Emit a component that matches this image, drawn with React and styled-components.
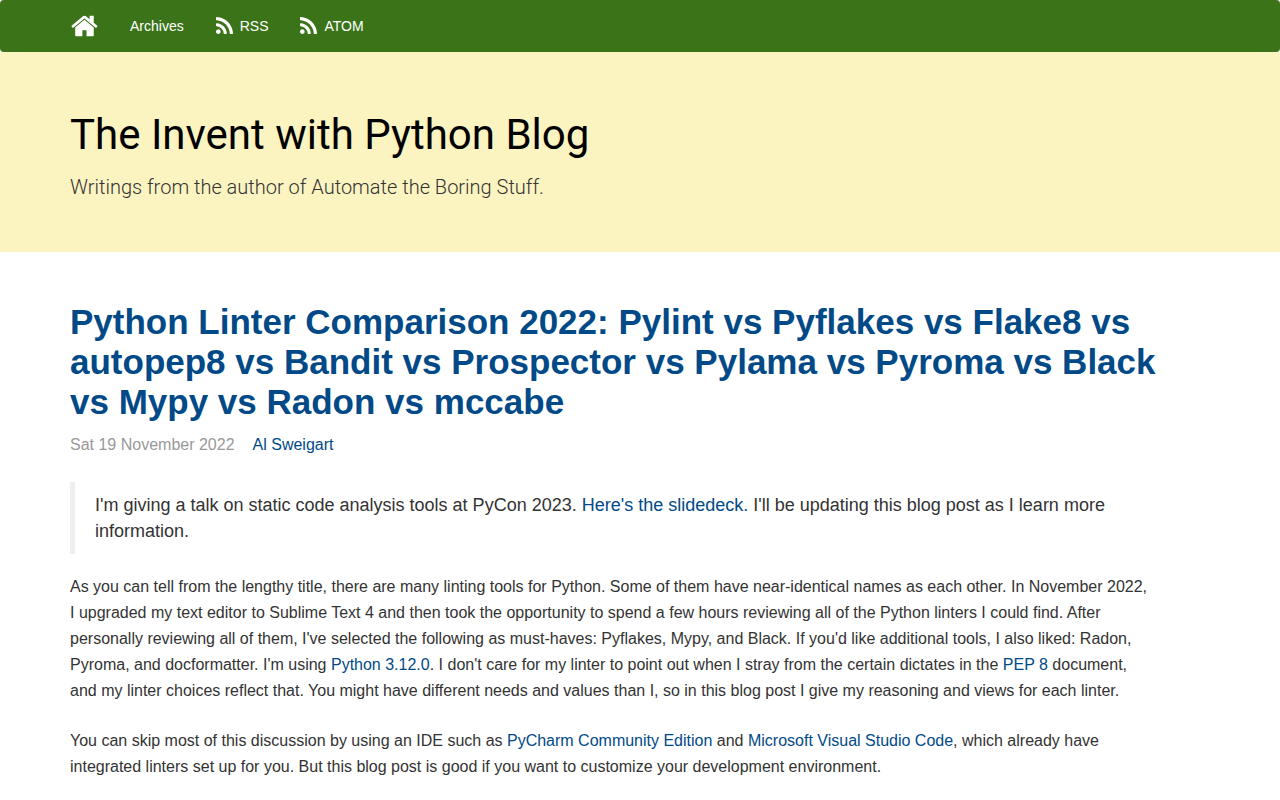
import React from "react";
import styled, { createGlobalStyle } from "styled-components";

const GlobalStyle = createGlobalStyle`
  * { box-sizing: border-box; }
  body {
    margin: 0;
    background: #fff;
    color: #333;
    font: 16px/26px "Liberation Sans", Arial, sans-serif;
  }
`;

const Container = styled.div`
  max-width: 1140px;
  margin: 0 auto;
`;

const NavBar = styled.nav`
  padding: 0 70px;
  background: #3b7319;
  border-radius: 4px;
`;

const NavList = styled(Container)`
  display: flex;
  align-items: center;
  gap: 32px;
  min-height: 52px;
`;

const NavLink = styled.a`
  display: flex;
  align-items: center;
  gap: 7px;
  color: #fff;
  font-size: 14px;
  line-height: 20px;
  text-decoration: none;
`;

const Icon = styled.svg`
  display: block;
  width: ${(p) => p.$width}px;
  height: ${(p) => p.$height}px;
  fill: currentColor;
`;

const Masthead = styled.header`
  padding: 60px 70px 51px;
  background: #fbf4c1;
`;

const SiteTitle = styled.h1`
  margin: 0 0 15px;
  color: #000;
  font-family: Roboto, sans-serif;
  font-size: 42px;
  line-height: 46px;
  font-weight: 400;
`;

const Tagline = styled.p`
  margin: 0;
  font-family: Roboto, sans-serif;
  font-size: 20px;
  line-height: 28px;
  font-weight: 300;
`;

const Main = styled.main`
  padding: 50px 70px 0;
`;

const Link = styled.a`
  color: #024a87;
  text-decoration: none;
`;

const PostTitle = styled.h2`
  max-width: 1100px;
  margin: 0 0 10px;
  font-size: 35px;
  line-height: 40px;
  font-weight: 700;
`;

const PostBody = styled.div`
  max-width: 1084px;
`;

const Byline = styled.div`
  display: flex;
  gap: 18px;
  margin-bottom: 24px;
`;

const PostDate = styled.time`
  color: #999;
`;

const Note = styled.blockquote`
  margin: 0 0 20px;
  padding: 10px 20px;
  border-left: 5px solid #eee;
  font-size: 18px;
`;

const Paragraph = styled.p`
  margin: 0 0 24px;
`;

const HomeIcon = () => (
  <Icon $width={28} $height={22} viewBox="0 253 1736 1283" aria-hidden="true">
    <path d="M1472 992v480q0 26-19 45t-45 19h-384v-384h-256v384h-384q-26 0-45-19t-19-45v-480q0-1 .5-3t.5-3l575-474 575 474q1 2 1 6zm223-69l-62 74q-8 9-21 11h-3q-13 0-21-7l-692-577-692 577q-12 8-24 7-13-2-21-11l-62-74q-8-10-7-23.500t11-21.500l719-599q32-26 76-26t76 26l244 204v-195q0-14 9-23t23-9h192q14 0 23 9t9 23v408l219 182q10 8 11 21.500t-7 23.500z" />
  </Icon>
);

const FeedIcon = () => (
  <Icon $width={17} $height={18} viewBox="192 128 1408 1492" aria-hidden="true">
    <path d="M576 1344q0 80-56 136t-136 56-136-56-56-136 56-136 136-56 136 56 56 136zm512 123q2 28-17 48-18 21-47 21h-135q-25 0-43-16.500t-20-41.500q-22-229-184.500-391.500t-391.500-184.500q-25-2-41.500-20t-16.500-43v-135q0-29 21-47 17-17 43-17h5q160 13 306 80.500t259 181.500q114 113 181.500 259t80.500 306zm512 2q2 27-18 47-18 20-46 20h-143q-26 0-44.500-17.500t-19.500-42.500q-12-215-101-408.500t-231.500-336-336-231.500-408.500-102q-25-1-42.500-19.500t-17.500-43.500v-143q0-28 20-46 18-18 44-18h3q262 13 501.500 120t425.500 294q187 186 294 425.500t120 501.500z" />
  </Icon>
);

export default function App() {
  return (
    <>
      <GlobalStyle />
      <NavBar>
        <NavList>
          <NavLink href="#home" aria-label="Home"><HomeIcon /></NavLink>
          <NavLink href="#archives">Archives</NavLink>
          <NavLink href="#rss"><FeedIcon />RSS</NavLink>
          <NavLink href="#atom"><FeedIcon />ATOM</NavLink>
        </NavList>
      </NavBar>
      <Masthead>
        <Container>
          <SiteTitle>The Invent with Python Blog</SiteTitle>
          <Tagline>Writings from the author of Automate the Boring Stuff.</Tagline>
        </Container>
      </Masthead>
      <Main>
        <Container as="article">
          <PostTitle>
            <Link href="#post">
              Python Linter Comparison 2022: Pylint vs Pyflakes vs Flake8 vs autopep8 vs Bandit vs
              Prospector vs Pylama vs Pyroma vs Black vs Mypy vs Radon vs mccabe
            </Link>
          </PostTitle>
          <PostBody>
            <Byline>
              <PostDate dateTime="2022-11-19">Sat 19 November 2022</PostDate>
              <Link href="#author">Al Sweigart</Link>
            </Byline>
            <Note>
              I'm giving a talk on static code analysis tools at PyCon 2023.{" "}
              <Link href="#slides">Here's the slidedeck.</Link> I'll be updating this blog post as I
              learn more information.
            </Note>
            <Paragraph>
              As you can tell from the lengthy title, there are many linting tools for Python. Some of
              them have near-identical names as each other. In November 2022, I upgraded my text editor
              to Sublime Text 4 and then took the opportunity to spend a few hours reviewing all of the
              Python linters I could find. After personally reviewing all of them, I've selected the
              following as must-haves: Pyflakes, Mypy, and Black. If you'd like additional tools, I also
              liked: Radon, Pyroma, and docformatter. I'm using{" "}
              <Link href="#python">Python 3.12.0</Link>. I don't care for my linter to point out when I
              stray from the certain dictates in the <Link href="#pep8">PEP 8</Link> document, and my
              linter choices reflect that. You might have different needs and values than I, so in this
              blog post I give my reasoning and views for each linter.
            </Paragraph>
            <Paragraph>
              You can skip most of this discussion by using an IDE such
              as <Link href="#pycharm">PyCharm Community Edition</Link> and{" "}
              <Link href="#vscode">Microsoft Visual Studio Code</Link>, which already have integrated
              linters set up for you. But this blog post is good if you want to customize your
              development environment.
            </Paragraph>
          </PostBody>
        </Container>
      </Main>
    </>
  );
}
